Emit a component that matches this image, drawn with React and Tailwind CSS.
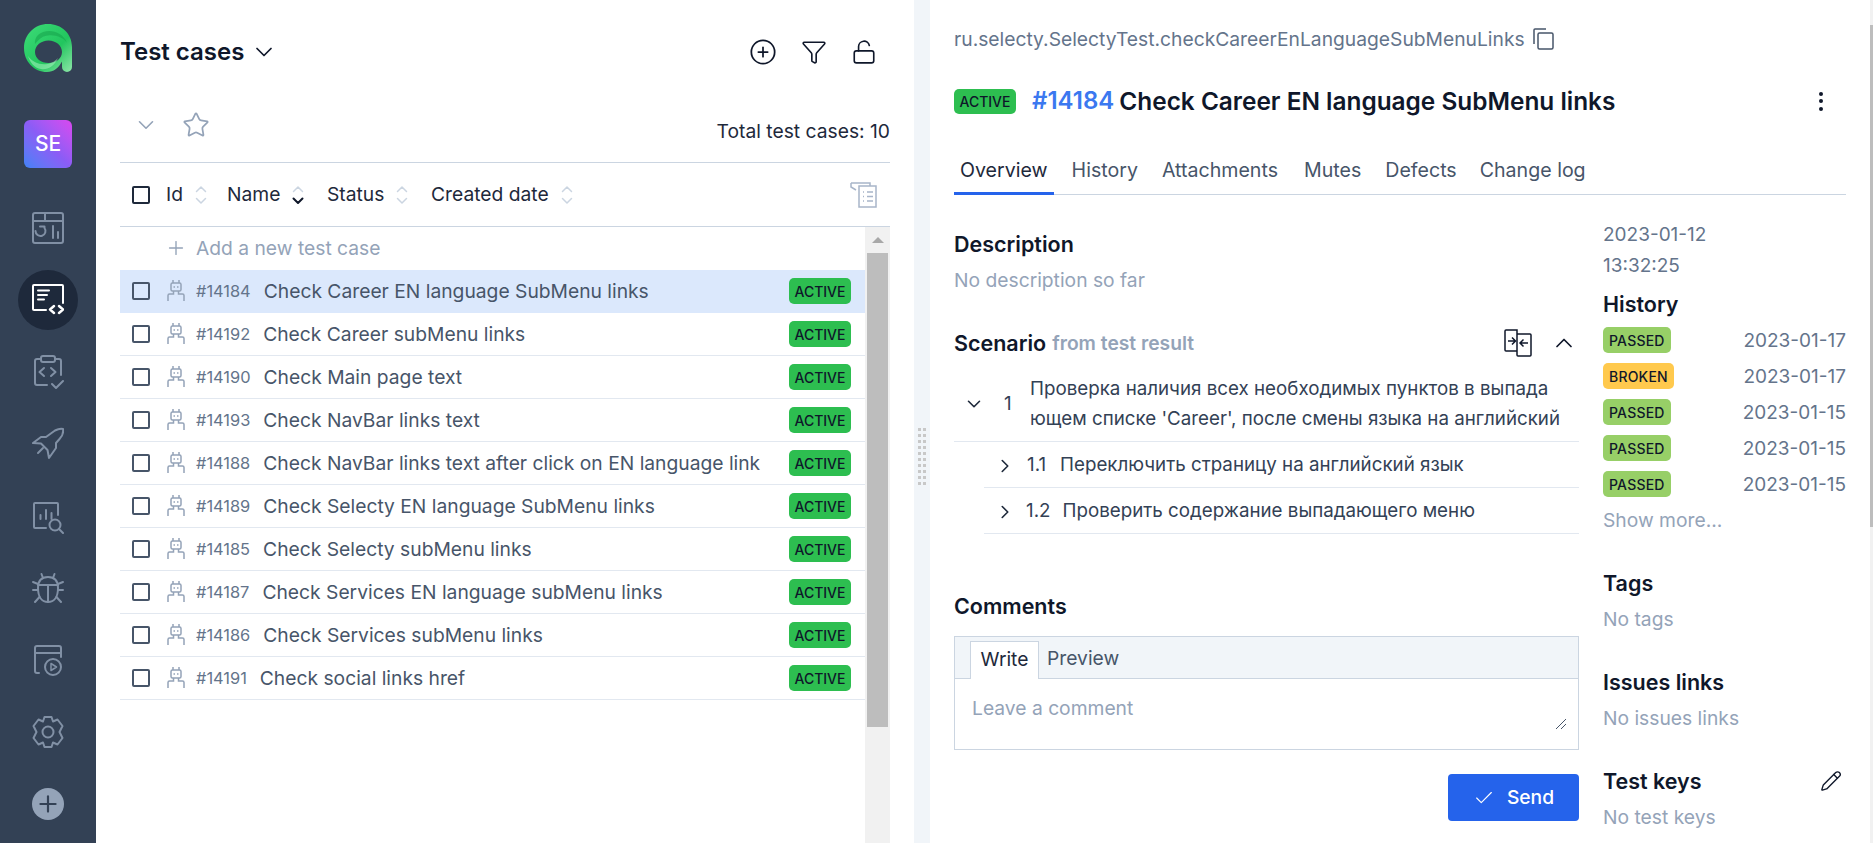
import React from 'react';
import {
  ChevronDown, ChevronUp, ChevronRight, Star, CirclePlus, Funnel, LockOpen, Plus, Check, Pencil,
} from 'lucide-react';

const cases = [
  { id: '#14184', name: 'Check Career EN language SubMenu links', selected: true },
  { id: '#14192', name: 'Check Career subMenu links' },
  { id: '#14190', name: 'Check Main page text' },
  { id: '#14193', name: 'Check NavBar links text' },
  { id: '#14188', name: 'Check NavBar links text after click on EN language link' },
  { id: '#14189', name: 'Check Selecty EN language SubMenu links' },
  { id: '#14185', name: 'Check Selecty subMenu links' },
  { id: '#14187', name: 'Check Services EN language subMenu links' },
  { id: '#14186', name: 'Check Services subMenu links' },
  { id: '#14191', name: 'Check social links href' },
];

const history = [
  { status: 'PASSED', date: '2023-01-17' },
  { status: 'BROKEN', date: '2023-01-17' },
  { status: 'PASSED', date: '2023-01-15' },
  { status: 'PASSED', date: '2023-01-15' },
  { status: 'PASSED', date: '2023-01-15' },
];

const NavSvg = ({ children, color = '#8190a5' }) => (
  <svg width="32" height="36" viewBox="0 0 32 36" fill="none" stroke={color} strokeWidth="2" strokeLinecap="round" strokeLinejoin="round">
    {children}
  </svg>
);

const Logo = () => (
  <svg width="48" height="48" viewBox="0 0 48 48">
    <defs>
      <linearGradient id="logoRing" x1="0" y1="0" x2="1" y2="1">
        <stop offset="0" stopColor="#3ddc78" />
        <stop offset="0.6" stopColor="#22c55e" />
        <stop offset="1" stopColor="#8ee6a8" />
      </linearGradient>
    </defs>
    <path fillRule="evenodd" fill="url(#logoRing)" d="M24 0C37.500 0 48 9.500 48 23V43a5 5 0 0 1-10 0V37.500C34.500 44 29.500 48 23 48 10 48 0 37.500 0 24 0 10.500 10.500 0 24 0ZM24.500 16.500C17 16.500 11 21.500 11 28C11 34.500 17 39 24.500 39C32 39 38 34.500 38 28C38 21.500 32 16.500 24.500 16.500Z" />
    <path fill="#16a34a" opacity="0.55" d="M14 11C22 4 38 6 43 19 40 14 32 10.500 24 11.500 19 12 16 14 11 20 10.500 16.500 11.500 13.500 14 11Z" />
    <path fill="#a7f3c0" opacity="0.55" d="M4 32C10 41 25 44 34 34 30 43 23 46 17 45 10 44 6 38 4 32Z" />
  </svg>
);

const DashIcon = () => (
  <NavSvg>
    <rect x="1" y="3" width="30" height="30" rx="2" />
    <path d="M1 11H31M13 3V11" />
    <path d="M8 16.500H12.500V18a5 5 0 1 1-9 3" />
    <path d="M21 16V28M26 22V28" />
  </NavSvg>
);

const CasesIcon = () => (
  <NavSvg color="#ffffff">
    <path d="M14 28H2a1 1 0 0 1-1-1V4a1 1 0 0 1 1-1H30a1 1 0 0 1 1 1V21" />
    <path d="M6 8.500H17M6 13H15M6 17.500H12" />
    <path d="M22 24L18 27.500L22 31M27 24L31 27.500L27 31" strokeWidth="2.400" />
  </NavSvg>
);

const ClipboardIcon = () => (
  <NavSvg>
    <path d="M9 5H5a2 2 0 0 0-2 2V29a2 2 0 0 0 2 2H15M23 5h4a2 2 0 0 1 2 2V21" />
    <rect x="9" y="2" width="14" height="6" rx="2" />
    <path d="M12 14L7.500 18L12 22M19 14L23.500 18L19 22" />
    <path d="M20 30L24 34L31 27" />
  </NavSvg>
);

const RocketIcon = () => (
  <NavSvg>
    <path d="M1 17L9 11H14L23 4.500C26 3 29 2.500 31 3C31.500 6 30.500 10 27.500 13L24 17V22L17 32L15.500 24L9 17.500Z" />
    <path d="M6 27L11 22" />
  </NavSvg>
);

const ReportIcon = () => (
  <NavSvg>
    <path d="M14 30H3a1 1 0 0 1-1-1V6a1 1 0 0 1 1-1H25a1 1 0 0 1 1 1V17" />
    <path d="M8.500 17V21M14 12V21M19.500 15V21" />
    <circle cx="23" cy="27" r="5.500" />
    <path d="M27 31L31 35" />
  </NavSvg>
);

const BugIcon = () => (
  <NavSvg>
    <path d="M6 18C6 10 10 7 16 7S26 10 26 18C26 27 22 32 16 32S6 27 6 18Z" />
    <path d="M6 15H26M16 15V32" />
    <path d="M11 8L9.500 4M21 8L22.500 4" />
    <path d="M6 14L1 12M26 14L31 12M6 20H1M26 20H31M7.500 27L3 32M24.500 27L29 32" />
  </NavSvg>
);

const RunIcon = () => (
  <NavSvg>
    <path d="M7 31H5a2 2 0 0 1-2-2V6a2 2 0 0 1 2-2H27a2 2 0 0 1 2 2V15" />
    <path d="M3 11H29" />
    <circle cx="21" cy="25" r="8" />
    <path d="M19 21.500L24.500 25L19 28.500Z" strokeWidth="1.500" />
  </NavSvg>
);

const GearIcon = () => (
  <NavSvg>
    <path d="M12.500 3H19.500L21 7.500L25.500 5.500L30.500 12L27.500 18L30.500 24L25.500 30.500L21 28.500L19.500 33H12.500L11 28.500L6.500 30.500L1.500 24L4.500 18L1.500 12L6.500 5.500L11 7.500Z" />
    <circle cx="16" cy="18" r="5.500" />
  </NavSvg>
);

const Sidebar = () => (
  <aside className="w-24 shrink-0 bg-[#334155] flex flex-col items-center pt-6">
    <Logo />
    <div className="mt-12 mb-6 w-12 h-12 rounded-md bg-gradient-to-tr from-[#3b82f6] via-[#8b5cf6] to-[#d946ef] flex items-center justify-center text-white text-[21px] font-medium">SE</div>
    <div className="h-[72px] flex items-center"><DashIcon /></div>
    <div className="h-[72px] flex items-center">
      <div className="w-[60px] h-[60px] rounded-full bg-[#1e293b] flex items-center justify-center"><CasesIcon /></div>
    </div>
    <div className="h-[72px] flex items-center"><ClipboardIcon /></div>
    <div className="h-[72px] flex items-center"><RocketIcon /></div>
    <div className="h-[72px] flex items-center"><ReportIcon /></div>
    <div className="h-[72px] flex items-center"><BugIcon /></div>
    <div className="h-[72px] flex items-center"><RunIcon /></div>
    <div className="h-[72px] flex items-center"><GearIcon /></div>
    <div className="h-[72px] flex items-center">
      <div className="w-8 h-8 rounded-full bg-[#94a3b8] flex items-center justify-center text-[#334155]">
        <Plus size={26} strokeWidth={2} />
      </div>
    </div>
  </aside>
);

const Checkbox = ({ dark }) => (
  <span className={`block w-[18px] h-[18px] shrink-0 rounded-[2px] border-2 ${dark ? 'border-[#1e293b]' : 'border-[#475569]'}`} />
);

const SortIcon = ({ active }) => (
  <svg width="12" height="20" viewBox="0 0 12 20" fill="none" strokeWidth="1.500" strokeLinecap="round" strokeLinejoin="round" className="shrink-0">
    <path d="M1.500 6.500L6 2L10.500 6.500" stroke="#cbd5e1" />
    <path d="M1.500 13.500L6 18L10.500 13.500" stroke={active ? '#0f172a' : '#cbd5e1'} strokeWidth={active ? 2 : 1.5} />
  </svg>
);

const Robot = () => (
  <svg width="18" height="22" viewBox="0 0 18 22" fill="none" stroke="#94a3b8" strokeWidth="1.500" className="shrink-0">
    <path d="M6 3V0M12 3V0" />
    <rect x="4" y="3" width="10" height="8" rx="1.500" />
    <path d="M6.500 7H8M10 7H11.500" />
    <path d="M6.500 11V14H2.500A1.500 1.500 0 0 0 1 15.500V21M11.500 11V14H15.500A1.500 1.500 0 0 1 17 15.500V21" />
  </svg>
);

const HeaderCell = ({ label, active, className }) => (
  <div className={`flex items-center gap-[12px] ${className}`}>
    <span>{label}</span>
    <SortIcon active={active} />
  </div>
);

const TestCasesPanel = () => (
  <section className="w-[818px] shrink-0 bg-white pl-6 flex flex-col">
    <div className="w-[770px] flex items-center justify-between h-[36px] mt-[34px]">
      <div className="flex items-center gap-[6px] text-[24px] font-semibold text-[#0f172a]">
        Test cases
        <ChevronDown size={28} strokeWidth={1.500} />
      </div>
      <div className="flex items-center gap-[24px] text-[#0f172a] pr-[13px]">
        <CirclePlus size={28} strokeWidth={1.500} />
        <Funnel size={26} strokeWidth={1.500} />
        <LockOpen size={26} strokeWidth={1.500} />
      </div>
    </div>
    <div className="w-[770px] h-[93px] flex justify-between border-b border-[#cbd5e1]">
      <div className="flex items-center gap-[23px] pl-[13px] text-[#94a3b8] h-[38px] mt-[36px]">
        <ChevronDown size={26} strokeWidth={1.500} />
        <Star size={28} strokeWidth={1.500} />
      </div>
      <div className="text-[19.250px] text-[#1e293b] pt-[47px]">Total test cases: 10</div>
    </div>
    <div className="w-[770px] h-[64px] flex items-center border-b border-[#cbd5e1] pl-3 text-[19.250px] text-[#1e293b]">
      <Checkbox dark />
      <HeaderCell label="Id" className="ml-4 w-[61px]" />
      <HeaderCell label="Name" className="w-[100px]" active />
      <HeaderCell label="Status" className="w-[104px]" />
      <HeaderCell label="Created date" />
      <svg width="28" height="28" viewBox="0 0 28 28" fill="none" stroke="#a8b5c9" strokeWidth="1.500" className="ml-auto mr-[12px]">
        <path d="M1 2H20V5M1 2V6L6 9" />
        <rect x="9" y="5" width="17" height="21" fill="#fff" />
        <path d="M13 11H14M17 11H23M13 15.500H14M17 15.500H23M13 20H14M17 20H23" />
      </svg>
    </div>
    <div className="flex w-[770px] flex-1 min-h-0">
      <div className="flex-1 min-w-0">
        <div className="h-[43px] flex items-center pl-[45px] text-[19.250px] text-[#94a3b8] gap-[9px] pb-px">
          <Plus size={22} strokeWidth={1.500} />
          Add a new test case
        </div>
        {cases.map((c) => (
          <div key={c.id} className={`h-[43px] flex items-center pl-3 pr-[14px] border-b ${c.selected ? 'bg-[#dbe8fc] border-[#dbe8fc]' : 'border-[#e2e8f0]'}`}>
            <Checkbox />
            <span className="ml-[17px]"><Robot /></span>
            <span className="ml-[11px] text-[16.400px] text-[#64748b]">{c.id}</span>
            <span className="ml-[13px] text-[19.250px] text-[#475569] whitespace-nowrap">{c.name}</span>
            <span className="ml-auto h-[26px] w-[62px] rounded-[5px] bg-[#2dbe50] flex items-center justify-center text-[14px] font-medium text-[#0f172a]">ACTIVE</span>
          </div>
        ))}
      </div>
      <div className="w-[25px] shrink-0 bg-[#f1f1f1] flex flex-col items-center">
        <div className="h-[26px] flex items-center">
          <span className="block w-0 h-0 border-l-[6px] border-r-[6px] border-b-[6px] border-l-transparent border-r-transparent border-b-[#a8a8a8]" />
        </div>
        <div className="w-[21px] h-[474px] bg-[#bdbdbd]" />
      </div>
    </div>
  </section>
);

const Splitter = () => (
  <div className="w-4 shrink-0 bg-[#f1f5f9] flex items-center justify-center">
    <div className="grid grid-cols-2 gap-x-[2px] gap-y-[3px] mt-[69px]">
      {Array.from({ length: 20 }).map((_, i) => (
        <span key={i} className="block w-[3px] h-[3px] bg-[#c8c8c8]" />
      ))}
    </div>
  </div>
);

const StepChevron = ({ down }) => (down ? <ChevronDown size={22} strokeWidth={1.750} /> : <ChevronRight size={22} strokeWidth={1.750} />);

const SideBlock = ({ title, empty, children, className }) => (
  <div className={className}>
    <div className="h-[24px] flex items-center justify-between text-[21.500px] font-semibold text-[#0f172a]">
      {title}
      {children}
    </div>
    <div className="mt-3 h-6 flex items-center text-[19.250px] text-[#94a3b8]">{empty}</div>
  </div>
);

const DetailsPanel = () => (
  <section className="flex-1 min-w-0 bg-white pl-6 pr-[27px] relative">
    <div className="mt-[26px] h-[26px] flex items-center gap-[8px] text-[19.250px] text-[#64748b]">
      ru.selecty.SelectyTest.checkCareerEnLanguageSubMenuLinks
      <svg width="21" height="22" viewBox="0 0 21 22" fill="none" stroke="#475569" strokeWidth="1.500">
        <path d="M1 16V2a1 1 0 0 1 1-1H13" />
        <rect x="5" y="5" width="15" height="16" rx="1.500" />
      </svg>
    </div>
    <div className="mt-[33px] h-8 flex items-center">
      <span className="h-[25px] w-[62px] rounded-[5px] bg-[#2dbe50] flex items-center justify-center text-[14px] font-medium text-[#0f172a]">ACTIVE</span>
      <span className="ml-[16px] text-[24px] font-semibold text-[#3b78f0]">#14184</span>
      <span className="ml-[5px] text-[24.400px] font-semibold text-[#0f172a]">Check Career EN language SubMenu links</span>
      <span className="ml-auto mr-[23px] flex flex-col gap-[3.500px]">
        <i className="block w-1 h-1 rounded-full bg-[#0f172a]" />
        <i className="block w-1 h-1 rounded-full bg-[#0f172a]" />
        <i className="block w-1 h-1 rounded-full bg-[#0f172a]" />
      </span>
    </div>
    <div className="mt-[33px] h-[45px] flex border-b border-[#cbd5e1] text-[19.600px] text-[#475569]">
      <span className="h-[45px] px-[6px] pt-[6px] border-b-[3px] border-[#2563eb] text-[#1e293b]">Overview</span>
      <span className="ml-[18px] pt-[6px]">History</span>
      <span className="ml-[24px] pt-[6px]">Attachments</span>
      <span className="ml-[26px] pt-[6px]">Mutes</span>
      <span className="ml-[24px] pt-[6px]">Defects</span>
      <span className="ml-[23px] pt-[6px]">Change log</span>
    </div>
    <div className="flex justify-between">
      <div className="w-[625px]">
        <div className="mt-[37px] h-6 flex items-center text-[21.500px] font-semibold text-[#0f172a]">Description</div>
        <div className="mt-3 h-6 flex items-center text-[19.250px] text-[#94a3b8]">No description so far</div>
        <div className="mt-[37px] h-7 flex items-center">
          <span className="text-[21.500px] font-semibold text-[#0f172a]">Scenario</span>
          <span className="ml-[6px] text-[19.250px] font-semibold text-[#94a3b8]">from test result</span>
          <svg width="28" height="28" viewBox="0 0 28 28" fill="none" stroke="#0f172a" strokeWidth="1.500" className="ml-auto">
            <path d="M13 22H2a1 1 0 0 1-1-1V2a1 1 0 0 1 1-1H13V26a1 1 0 0 0 1 1H26a1 1 0 0 0 1-1V6a1 1 0 0 0-1-1H13" />
            <path d="M4 12H11M8 8.500L11.500 12L8 15.500M24 14H16M19.500 10.500L16 14L19.500 17.500" />
          </svg>
          <ChevronUp size={28} strokeWidth={1.500} className="ml-[18px] mr-px text-[#0f172a]" />
        </div>
        <div className="mt-[10px] h-[75px] flex items-center border-b border-[#e2e8f0] text-[18.750px] text-[#334155] leading-[30px]">
          <span className="w-[9px]" />
          <span className="text-[#1e293b]"><StepChevron down /></span>
          <span className="ml-[19px] w-[26px]">1</span>
          <span className="whitespace-pre-line">{"Проверка наличия всех необходимых пунктов в выпада\nющем списке 'Career', после смены языка на английский"}</span>
        </div>
        <div className="ml-[30px] h-[46px] pt-[2px] flex items-center border-b border-[#e2e8f0] text-[18.750px] text-[#334155]">
          <span className="ml-[10px] text-[#1e293b]"><StepChevron /></span>
          <span className="ml-[11px]">1.1</span>
          <span className="ml-[14px]">Переключить страницу на английский язык</span>
        </div>
        <div className="ml-[30px] h-[46px] pt-[2px] flex items-center border-b border-[#e2e8f0] text-[18.750px] text-[#334155]">
          <span className="ml-[10px] text-[#1e293b]"><StepChevron /></span>
          <span className="ml-[10px]">1.2</span>
          <span className="ml-[12px]">Проверить содержание выпадающего меню</span>
        </div>
        <div className="mt-[60px] h-6 flex items-center text-[21.500px] font-semibold text-[#0f172a]">Comments</div>
        <div className="mt-[18px] h-[114px] border border-[#cbd5e1] relative">
          <div className="h-[42px] bg-[#f1f5f9] border-b border-[#cbd5e1] pl-[15px] pt-[4px] flex text-[19.250px]">
            <span className="h-[38px] w-[69px] pb-[3px] bg-white border border-b-0 border-[#cbd5e1] flex items-center justify-center text-[#1e293b]">Write</span>
            <span className="ml-[8px] h-[38px] pb-[3px] flex items-center text-[#475569]">Preview</span>
          </div>
          <div className="pl-[17px] pt-[15px] text-[19.250px] text-[#94a3b8]">Leave a comment</div>
          <svg width="12" height="12" viewBox="0 0 12 12" stroke="#475569" strokeWidth="1" className="absolute right-[11px] bottom-[19px]">
            <path d="M1 11L11 1M6 11L11 6" />
          </svg>
        </div>
        <div className="mt-[24px] flex justify-end">
          <button className="w-[131px] h-[47px] rounded-[4px] bg-[#2563eb] text-white text-[19.250px] font-medium flex items-center justify-center gap-[12px]">
            <Check size={22} strokeWidth={1.250} />
            Send
          </button>
        </div>
      </div>
      <div className="w-[243px]">
        <div className="mt-[24px] text-[19px] leading-[31px] text-[#64748b]">2023-01-12<br />13:32:25</div>
        <div className="mt-[11px] h-[24px] flex items-center text-[21.500px] font-semibold text-[#0f172a]">History</div>
        <div className="mt-[11px]">
          {history.map((h, i) => (
            <div key={i} className="h-9 flex items-start justify-between">
              <span className={`h-[26px] px-[6px] rounded-[5px] flex items-center text-[14px] font-medium tracking-[0.2px] text-[#0f172a] ${h.status === 'BROKEN' ? 'bg-[#ffc94d]' : 'bg-[#97cf67]'}`}>{h.status}</span>
              <span className="text-[19px] text-[#64748b] leading-[27px]">{h.date}</span>
            </div>
          ))}
        </div>
        <div className="h-6 mt-px flex items-center text-[19.250px] text-[#94a3b8]">Show more...</div>
        <SideBlock title="Tags" empty="No tags" className="mt-[39px]" />
        <SideBlock title="Issues links" empty="No issues links" className="mt-[39px]" />
        <SideBlock title="Test keys" empty="No test keys" className="mt-[39px]">
          <Pencil size={22} strokeWidth={1.500} className="mr-[4px]" />
        </SideBlock>
      </div>
    </div>
    <div className="absolute right-0 top-0 bottom-0 w-[3px] bg-[#f1f1f1]">
      <div className="mt-[25px] h-[502px] bg-[#bdbdbd]" />
    </div>
  </section>
);

export default function App() {
  return (
    <div className="flex h-[843px] overflow-hidden font-['Inter',sans-serif]">
      <Sidebar />
      <TestCasesPanel />
      <Splitter />
      <DetailsPanel />
    </div>
  );
}
